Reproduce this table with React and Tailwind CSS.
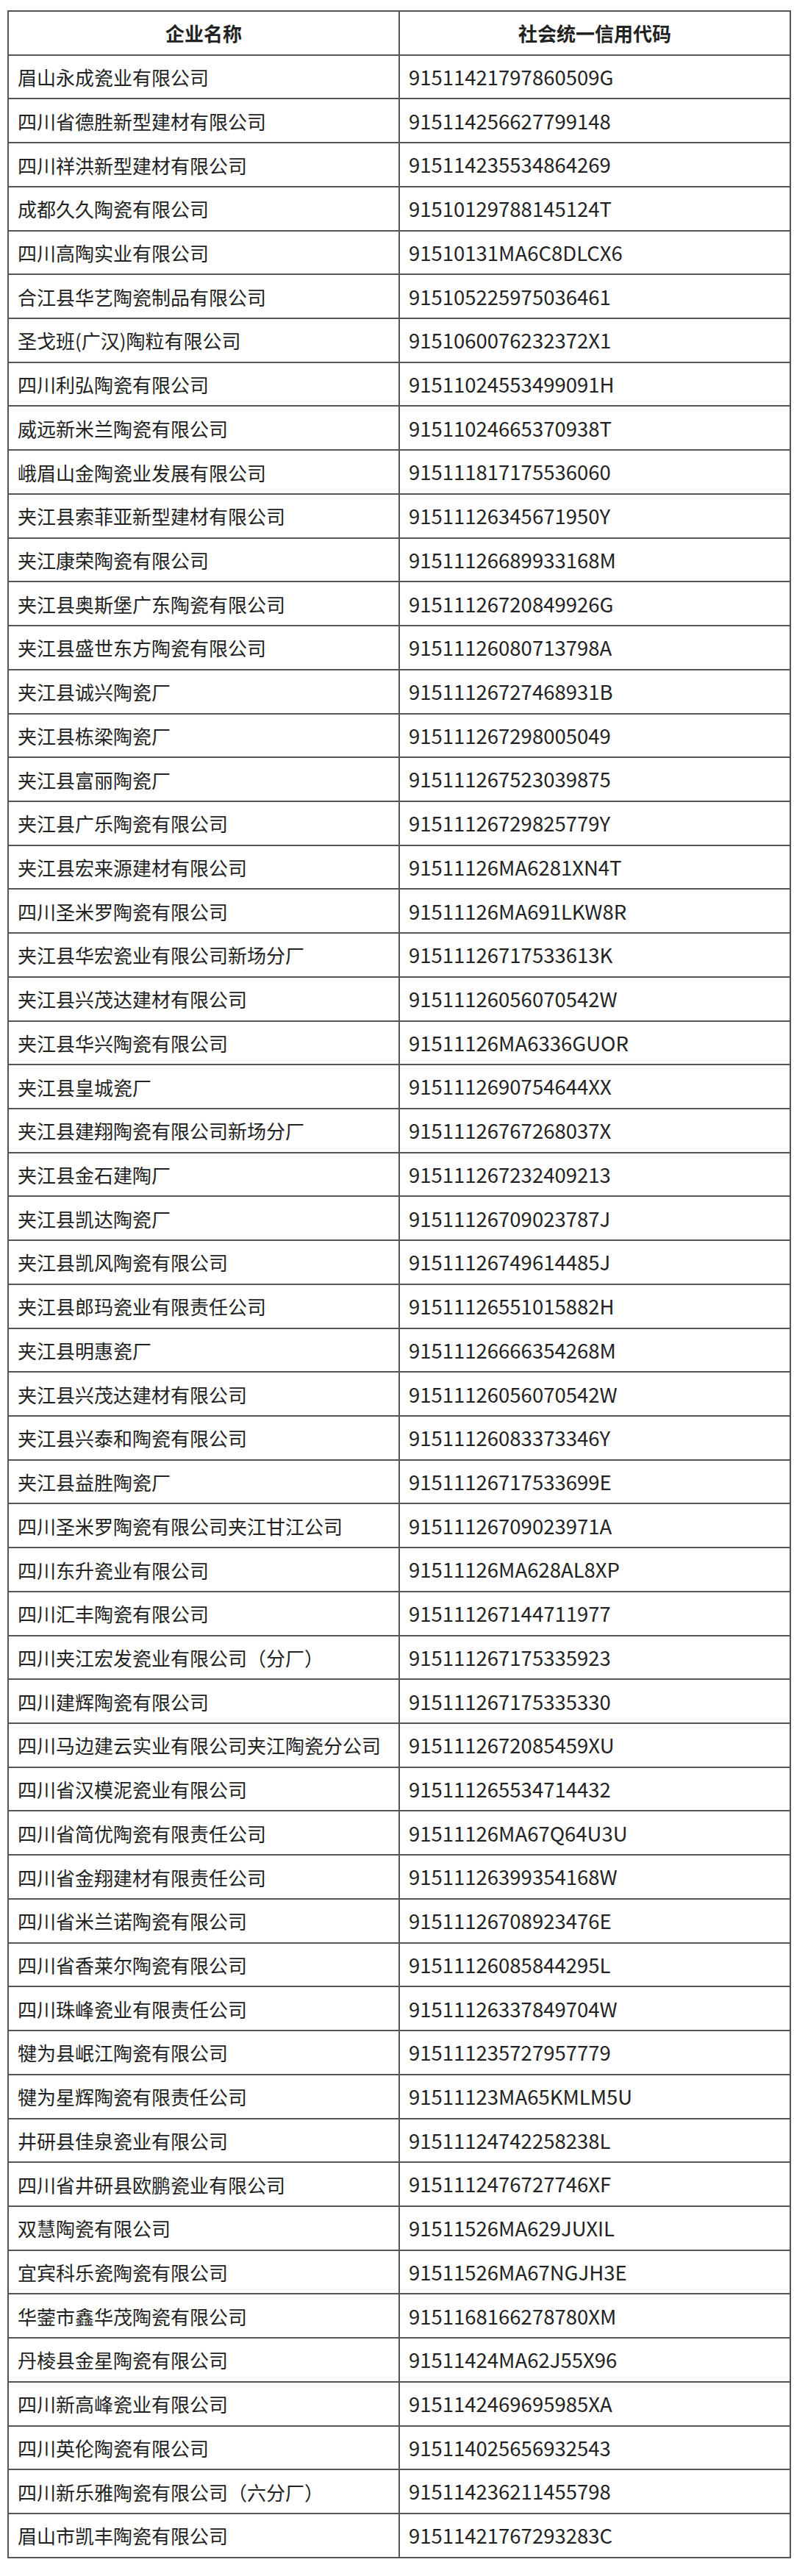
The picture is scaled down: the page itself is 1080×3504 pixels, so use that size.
const rows = [
  ["眉山永成瓷业有限公司", "91511421797860509G"],
  ["四川省德胜新型建材有限公司", "915114256627799148"],
  ["四川祥洪新型建材有限公司", "915114235534864269"],
  ["成都久久陶瓷有限公司", "91510129788145124T"],
  ["四川高陶实业有限公司", "91510131MA6C8DLCX6"],
  ["合江县华艺陶瓷制品有限公司", "915105225975036461"],
  ["圣戈班(广汉)陶粒有限公司", "9151060076232372X1"],
  ["四川利弘陶瓷有限公司", "91511024553499091H"],
  ["威远新米兰陶瓷有限公司", "91511024665370938T"],
  ["峨眉山金陶瓷业发展有限公司", "915111817175536060"],
  ["夹江县索菲亚新型建材有限公司", "91511126345671950Y"],
  ["夹江康荣陶瓷有限公司", "91511126689933168M"],
  ["夹江县奥斯堡广东陶瓷有限公司", "91511126720849926G"],
  ["夹江县盛世东方陶瓷有限公司", "91511126080713798A"],
  ["夹江县诚兴陶瓷厂", "91511126727468931B"],
  ["夹江县栋梁陶瓷厂", "915111267298005049"],
  ["夹江县富丽陶瓷厂", "915111267523039875"],
  ["夹江县广乐陶瓷有限公司", "91511126729825779Y"],
  ["夹江县宏来源建材有限公司", "91511126MA6281XN4T"],
  ["四川圣米罗陶瓷有限公司", "91511126MA691LKW8R"],
  ["夹江县华宏瓷业有限公司新场分厂", "91511126717533613K"],
  ["夹江县兴茂达建材有限公司", "91511126056070542W"],
  ["夹江县华兴陶瓷有限公司", "91511126MA6336GUOR"],
  ["夹江县皇城瓷厂", "9151112690754644XX"],
  ["夹江县建翔陶瓷有限公司新场分厂", "91511126767268037X"],
  ["夹江县金石建陶厂", "915111267232409213"],
  ["夹江县凯达陶瓷厂", "91511126709023787J"],
  ["夹江县凯风陶瓷有限公司", "91511126749614485J"],
  ["夹江县郎玛瓷业有限责任公司", "91511126551015882H"],
  ["夹江县明惠瓷厂", "91511126666354268M"],
  ["夹江县兴茂达建材有限公司", "91511126056070542W"],
  ["夹江县兴泰和陶瓷有限公司", "91511126083373346Y"],
  ["夹江县益胜陶瓷厂", "91511126717533699E"],
  ["四川圣米罗陶瓷有限公司夹江甘江公司", "91511126709023971A"],
  ["四川东升瓷业有限公司", "91511126MA628AL8XP"],
  ["四川汇丰陶瓷有限公司", "915111267144711977"],
  ["四川夹江宏发瓷业有限公司（分厂）", "915111267175335923"],
  ["四川建辉陶瓷有限公司", "915111267175335330"],
  ["四川马边建云实业有限公司夹江陶瓷分公司", "9151112672085459XU"],
  ["四川省汉模泥瓷业有限公司", "915111265534714432"],
  ["四川省简优陶瓷有限责任公司", "91511126MA67Q64U3U"],
  ["四川省金翔建材有限责任公司", "91511126399354168W"],
  ["四川省米兰诺陶瓷有限公司", "91511126708923476E"],
  ["四川省香莱尔陶瓷有限公司", "91511126085844295L"],
  ["四川珠峰瓷业有限责任公司", "91511126337849704W"],
  ["犍为县岷江陶瓷有限公司", "915111235727957779"],
  ["犍为星辉陶瓷有限责任公司", "91511123MA65KMLM5U"],
  ["井研县佳泉瓷业有限公司", "91511124742258238L"],
  ["四川省井研县欧鹏瓷业有限公司", "9151112476727746XF"],
  ["双慧陶瓷有限公司", "91511526MA629JUXIL"],
  ["宜宾科乐瓷陶瓷有限公司", "91511526MA67NGJH3E"],
  ["华蓥市鑫华茂陶瓷有限公司", "9151168166278780XM"],
  ["丹棱县金星陶瓷有限公司", "91511424MA62J55X96"],
  ["四川新高峰瓷业有限公司", "9151142469695985XA"],
  ["四川英伦陶瓷有限公司", "915114025656932543"],
  ["四川新乐雅陶瓷有限公司（六分厂）", "915114236211455798"],
  ["眉山市凯丰陶瓷有限公司", "91511421767293283C"],
];

export default function App() {
  return (
    <div
      className="w-[1080px] h-[3504px] bg-white pt-[14px] pl-[10px] text-[#222]"
      style={{ fontFamily: '"Noto Sans CJK SC", "Noto Sans", sans-serif' }}
    >
      <div className="w-[1066px] border-t-2 border-l-2 border-r-2 border-[#555]">
        <div className="flex h-[59.72px] border-b-2 border-[#555] font-bold text-[26px]">
          <div className="w-[532px] border-r-2 border-[#555] flex items-center justify-center">
            企业名称
          </div>
          <div className="flex-1 flex items-center justify-center">社会统一信用代码</div>
        </div>
        {rows.map(([name, code], i) => (
          <div key={i} className="flex h-[59.72px] border-b-2 border-[#555]">
            <div className="w-[532px] border-r-2 border-[#555] flex items-center pl-[12px] whitespace-nowrap text-[26px]">
              {name}
            </div>
            <div className="flex-1 flex items-center pl-[12px] whitespace-nowrap text-[27.5px]">
              {code}
            </div>
          </div>
        ))}
      </div>
    </div>
  );
}
